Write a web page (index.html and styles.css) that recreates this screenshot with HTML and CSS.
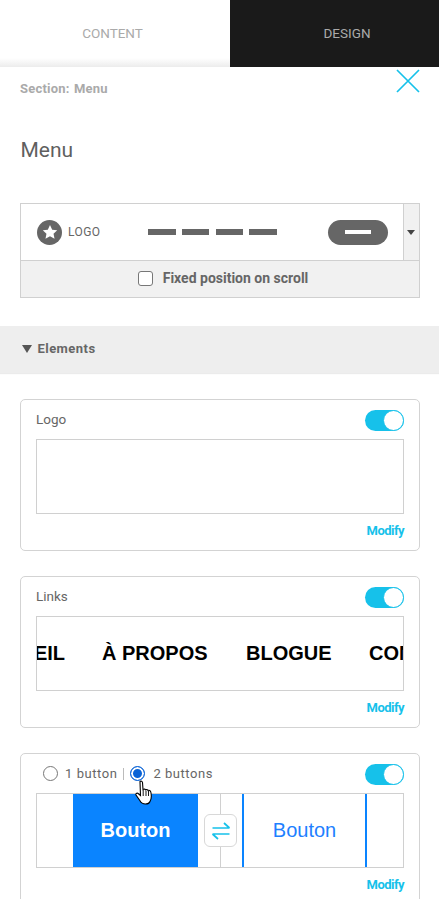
FILE: index.html
```html
<!DOCTYPE html>
<html lang="en">
<head>
<meta charset="utf-8">
<title>Menu</title>
<link rel="stylesheet" href="styles.css">
</head>
<body>
<div class="tabs">
  <div class="tab tab-light">CONTENT</div>
  <div class="tab tab-dark">DESIGN</div>
</div>
<main class="panel">
  <div class="top">
    <div class="crumb">Section: Menu</div>
    <svg class="close" width="24" height="24" viewBox="0 0 24 24"><path d="M1 1L23 23M23 1L1 23" stroke="#16c1ea" stroke-width="1.7" fill="none"/></svg>
  </div>
  <h1 class="title">Menu</h1>
  <div class="preview">
    <div class="preview-main">
      <div class="preview-row">
        <span class="logo-dot"><svg width="16" height="16" viewBox="0 0 24 24"><path d="M12 1.500l3.300 7 7.500.9-5.500 5.200 1.500 7.600L12 18.400l-6.800 3.800 1.500-7.600L1.200 9.400l7.500-.9z" fill="#fff"/></svg></span>
        <span class="logo-text">LOGO</span>
        <span class="dashes"><i class="d1"></i><i class="d2"></i><i class="d3"></i><i class="d4"></i></span>
        <span class="pill"><i></i></span>
      </div>
      <div class="caret-col"><span class="caret"></span></div>
    </div>
    <div class="preview-foot">
      <span class="check"></span>
      <span class="foot-label">Fixed position on scroll</span>
    </div>
  </div>
  <div class="bar"><span class="bar-tri"></span><span class="bar-label">Elements</span></div>

  <section class="card">
    <div class="card-head">
      <span class="card-label">Logo</span>
      <span class="toggle"><i></i></span>
    </div>
    <div class="box"></div>
    <div class="modify">Modify</div>
  </section>

  <section class="card">
    <div class="card-head">
      <span class="card-label">Links</span>
      <span class="toggle"><i></i></span>
    </div>
    <div class="box links">
      <span class="link l1">ACCUEIL</span>
      <span class="link l2">À PROPOS</span>
      <span class="link l3">BLOGUE</span>
      <span class="link l4">CONTACT</span>
    </div>
    <div class="modify">Modify</div>
  </section>

  <section class="card">
    <div class="card-head">
      <div class="radios">
        <span class="radio"></span><span class="radio-label">1 button</span>
        <span class="radio-sep"></span>
        <span class="radio on"></span><span class="radio-label">2 buttons</span>
      </div>
      <span class="toggle"><i></i></span>
    </div>
    <div class="box buttons">
      <div class="half left"><span class="btn solid">Bouton</span></div>
      <div class="half right"><span class="btn outline">Bouton</span></div>
      <span class="swap"><svg width="20" height="20" viewBox="0 0 20 20"><path d="M1.500 7H18.500M13 2L18.500 7M18.500 13H1.500M7 18L1.500 13" stroke="#16c1ea" stroke-width="1.700" fill="none"/></svg></span>
    </div>
    <div class="modify">Modify</div>
    <svg class="cursor" width="18" height="25" viewBox="0 0 18 25"><path d="M5 1.500C6 .8 7.300 1.200 7.500 2.500L8 9.500C9 8.800 10 9 10.500 9.800 11.500 9.200 12.500 9.500 13 10.500 14 10 15.500 10.500 15.800 12 16.500 15 16.500 19 15 21.500 14.500 23 13 24 10.500 24 7.500 24 6 22.800 4.800 20.500L1 15C.5 14 1.500 12.800 2.800 13.300L5.500 15.500z" fill="#fff" stroke="#000" stroke-width="1.100"/><path d="M8.200 10v6M11 10.500v5.500M13.500 11v5" stroke="#000" stroke-width=".9" fill="none"/></svg>
  </section>
</main>
</body>
</html>
```
FILE: styles.css
```css
* { box-sizing: border-box; }
html, body { margin: 0; padding: 0; height: 899px; overflow: hidden; background: #fff; }
body { font-family: Roboto, sans-serif; color: #666; }

.tabs { display: flex; height: 67px; }
.tab { display: flex; align-items: center; justify-content: center; font-size: 13.500px; padding-bottom: 1px; color: #aaa; }
.tab-light { width: 230px; padding-right: 5px; background: linear-gradient(to bottom, #fff 58px, #ececec 67px); }
.tab-dark { width: 209px; padding-left: 25px; background: #1a1a1a; }

.panel { position: relative; }
.top { position: relative; height: 43px; padding: 14px 20px 0; }
.crumb { font-size: 13px; font-weight: 700; color: #aaa; line-height: 15px; letter-spacing: .2px; word-spacing: 1px; }
.close { position: absolute; right: 19.500px; top: 2px; }
.title { margin: 14px 0 27px 20.500px; height: 52px; font-size: 21px; font-weight: 400; line-height: 52px; color: #5f5f5f; }

.preview { margin: 0 19px 0 20px; height: 95px; border: 1px solid #d0d0d0; background: #f1f1f1; }
.preview-main { display: flex; height: 57px; border-bottom: 1px solid #d0d0d0; }
.preview-row { flex: 1; display: flex; align-items: center; height: 56px; padding: 0 15px 0 16px; background: #fff; border-right: 1px solid #d0d0d0; }
.logo-dot { width: 25px; height: 25px; border-radius: 50%; background: #666; display: flex; align-items: center; justify-content: center; flex: none; }
.logo-text { width: 86px; padding-left: 6px; font-size: 12px; color: #666; letter-spacing: .4px; }
.dashes { display: flex; align-items: center; }
.dashes i { display: block; height: 6px; background: #666; }
.d1 { width: 28px; margin-right: 6px; }
.d2 { width: 27px; margin-right: 7px; }
.d3 { width: 27px; margin-right: 6px; }
.d4 { width: 28px; }
.pill { margin-left: auto; width: 60px; height: 25px; border-radius: 13px; background: #666; display: flex; align-items: center; justify-content: center; }
.pill i { display: block; width: 26px; height: 4px; background: #fff; }
.caret-col { width: 15.500px; display: flex; align-items: center; justify-content: center; }
.caret { width: 0; height: 0; border-left: 4px solid transparent; border-right: 4px solid transparent; border-top: 5px solid #444; }
.preview-foot { display: flex; align-items: center; justify-content: center; height: 36px; padding: 0 0 2px 6px; }
.check { width: 15px; height: 15px; border: 1px solid #777; border-radius: 3px; background: #fff; margin-right: 10px; }
.foot-label { font-size: 14px; font-weight: 700; color: #666; }

.bar { display: flex; align-items: center; height: 47px; margin-top: 28px; padding: 0 0 2px 22px; background: #eee; box-shadow: 0 1px 1px rgba(0,0,0,.08); }
.bar-tri { width: 0; height: 0; border-left: 5.500px solid transparent; border-right: 5.500px solid transparent; border-top: 8px solid #555; margin-right: 5.500px; }
.bar-label { font-size: 13px; font-weight: 700; color: #666; letter-spacing: .45px; }

.card { position: relative; margin: 26px 19px 0 20px; height: 152px; border: 1px solid #d3d3d3; border-radius: 5px; padding: 0 15px; }
.card + .card { margin-top: 25px; }
.card-head { display: flex; align-items: center; justify-content: space-between; height: 39px; }
.card-label { font-size: 13.500px; color: #666; position: relative; top: -1px; }
.toggle { position: relative; top: 1px; width: 39px; height: 21px; border-radius: 11px; background: #16c1ea; display: block; }
.toggle i { position: absolute; right: 0; top: 0; width: 21px; height: 21px; border-radius: 50%; background: #fff; border: 1px solid #16c1ea; }
.box { height: 75px; border: 1px solid #d0d0d0; background: #fff; }
.modify { margin-top: 9px; text-align: right; font-size: 13px; font-weight: 700; color: #16c1ea; line-height: 15px; letter-spacing: -.55px; }

.links { position: relative; overflow: hidden; }
.link { position: absolute; top: 25px; font-family: "Liberation Sans", Arial, sans-serif; font-weight: 700; font-size: 20px; line-height: 22px; color: #000; white-space: nowrap; }
.l1 { right: 338px; }
.l2 { left: 65px; }
.l3 { left: 209px; }
.l4 { left: 332px; }

.radios { display: flex; align-items: center; font-size: 13px; color: #666; letter-spacing: .55px; padding-left: 7px; }
.radio { width: 15px; height: 15px; border: 1.500px solid #777; border-radius: 50%; background: #fff; }
.radio.on { border-color: #0a63d6; background: #0a63d6; box-shadow: inset 0 0 0 2px #fff; }
.radio-label { margin-left: 7px; }
.radio-sep { width: 1px; height: 12px; background: #bbb; margin: 0 6px; }
.radios .radio-label:last-child { margin-left: 8px; }

.buttons { display: flex; position: relative; }
.half { height: 100%; }
.half.left { width: 184px; padding-left: 36px; border-right: 1px solid #d0d0d0; }
.half.right { width: 182px; padding-left: 21px; }
.btn { display: flex; align-items: center; justify-content: center; height: 100%; width: 125px; font-family: "Liberation Sans", Arial, sans-serif; font-size: 20px; }
.btn.solid { background: #0a84ff; color: #fff; font-weight: 700; }
.btn.outline { color: #1e80ff; border-left: 2px solid #0a84ff; border-right: 2px solid #0a84ff; }
.swap { position: absolute; left: 167px; top: 20px; width: 33px; height: 33px; border: 1px solid #d8d8d8; border-radius: 6px; background: #fff; display: flex; align-items: center; justify-content: center; }
.cursor { position: absolute; left: 114px; top: 26px; }
```
